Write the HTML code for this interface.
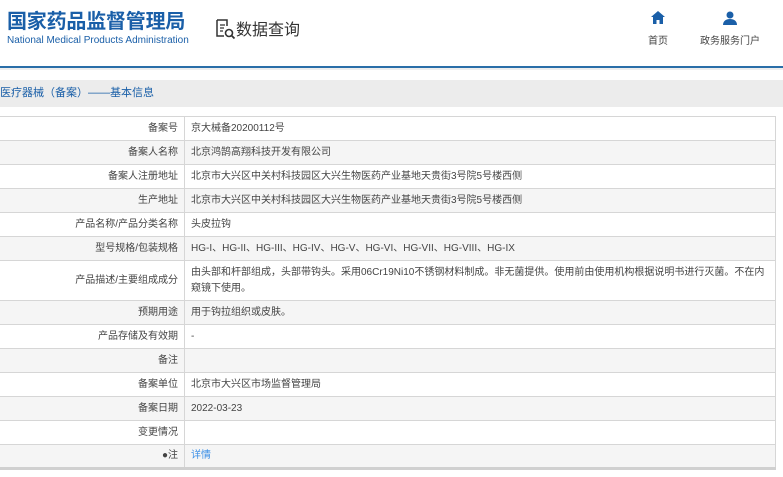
<!DOCTYPE html>
<html><head><meta charset="utf-8"><style>
*{margin:0;padding:0;box-sizing:border-box}
body{width:783px;height:477px;background:#fff;font-family:"Liberation Sans","Noto Sans CJK SC",sans-serif;position:relative;overflow:hidden}
.t1{position:absolute;left:7px;top:8px;font-size:20px;line-height:24px;font-weight:bold;color:#1a5fa8;letter-spacing:-0.2px;font-family:"Noto Sans CJK SC",sans-serif}
.t2{position:absolute;left:7px;top:35px;font-size:10px;line-height:12px;color:#1a5fa8}
.q{position:absolute;left:214px;top:16px;font-size:16px;color:#333}
.nav{position:absolute;top:11px;font-size:10px;color:#444;text-align:center}
.line{position:absolute;left:0;top:66px;width:783px;height:2px;background:#2a6ea8}
.line2{position:absolute;left:0;top:68px;width:783px;height:2px;background:#eee}
.sec{position:absolute;left:0;top:80px;width:783px;height:27px;background:#ececec;font-size:11px;color:#1a5fa8;line-height:27px;padding-left:0}
table{position:absolute;left:-2px;top:116px;width:778px;border-collapse:collapse;font-size:10px;color:#444}
td{border:1px solid #d6d6d6;height:24px;padding:0 6px;line-height:16px}
td.l{width:186px;text-align:right;color:#444}
tr:nth-child(even) td{background:#f5f5f5}
table{border-bottom:3px solid #d0d0d0}
</style></head><body>
<div class="t1">国家药品监督管理局</div>
<div class="t2">National Medical Products Administration</div>
<div class="q"><svg width="22" height="22" viewBox="0 0 22 22" style="vertical-align:-5px"><path d="M3 2h10v6M3 2v16h7" fill="none" stroke="#333" stroke-width="1.5"/><path d="M6 7h5M6 10h4M6 13h3" stroke="#333" stroke-width="1.3"/><circle cx="15" cy="15" r="3.5" fill="none" stroke="#333" stroke-width="1.6"/><path d="M17.5 17.5l3 3" stroke="#333" stroke-width="1.8"/></svg>数据查询</div>
<div class="nav" style="left:648px"><svg width="14" height="13" viewBox="0 0 14 13"><path d="M7 0L0 6h2v7h3.5V9h3v4H12V6h2z" fill="#1a5fa8"/></svg><div style="margin-top:5px">首页</div></div>
<div class="nav" style="left:700px"><svg width="16" height="14" viewBox="0 0 16 14"><circle cx="8" cy="4" r="3.5" fill="#1a5fa8"/><path d="M1 14c0-4 3-6 7-6s7 2 7 6z" fill="#1a5fa8"/></svg><div style="margin-top:4px">政务服务门户</div></div>
<div class="line"></div><div class="line2"></div>
<div class="sec">医疗器械（备案）——基本信息</div>
<table>
<tr><td class="l">备案号</td><td>京大械备20200112号</td></tr>
<tr><td class="l">备案人名称</td><td>北京鸿鹄高翔科技开发有限公司</td></tr>
<tr><td class="l">备案人注册地址</td><td>北京市大兴区中关村科技园区大兴生物医药产业基地天贵街3号院5号楼西侧</td></tr>
<tr><td class="l">生产地址</td><td>北京市大兴区中关村科技园区大兴生物医药产业基地天贵街3号院5号楼西侧</td></tr>
<tr><td class="l">产品名称/产品分类名称</td><td>头皮拉钩</td></tr>
<tr><td class="l">型号规格/包装规格</td><td>HG-I、HG-II、HG-III、HG-IV、HG-V、HG-VI、HG-VII、HG-VIII、HG-IX</td></tr>
<tr><td class="l" style="height:40px">产品描述/主要组成成分</td><td>由头部和杆部组成，头部带钩头。采用06Cr19Ni10不锈钢材料制成。非无菌提供。使用前由使用机构根据说明书进行灭菌。不在内窥镜下使用。</td></tr>
<tr><td class="l">预期用途</td><td>用于钩拉组织或皮肤。</td></tr>
<tr><td class="l">产品存储及有效期</td><td>-</td></tr>
<tr><td class="l">备注</td><td></td></tr>
<tr><td class="l">备案单位</td><td>北京市大兴区市场监督管理局</td></tr>
<tr><td class="l">备案日期</td><td>2022-03-23</td></tr>
<tr><td class="l">变更情况</td><td></td></tr>
<tr><td class="l">●注</td><td style="color:#3a8ee6">详情</td></tr>
</table>
</body></html>
